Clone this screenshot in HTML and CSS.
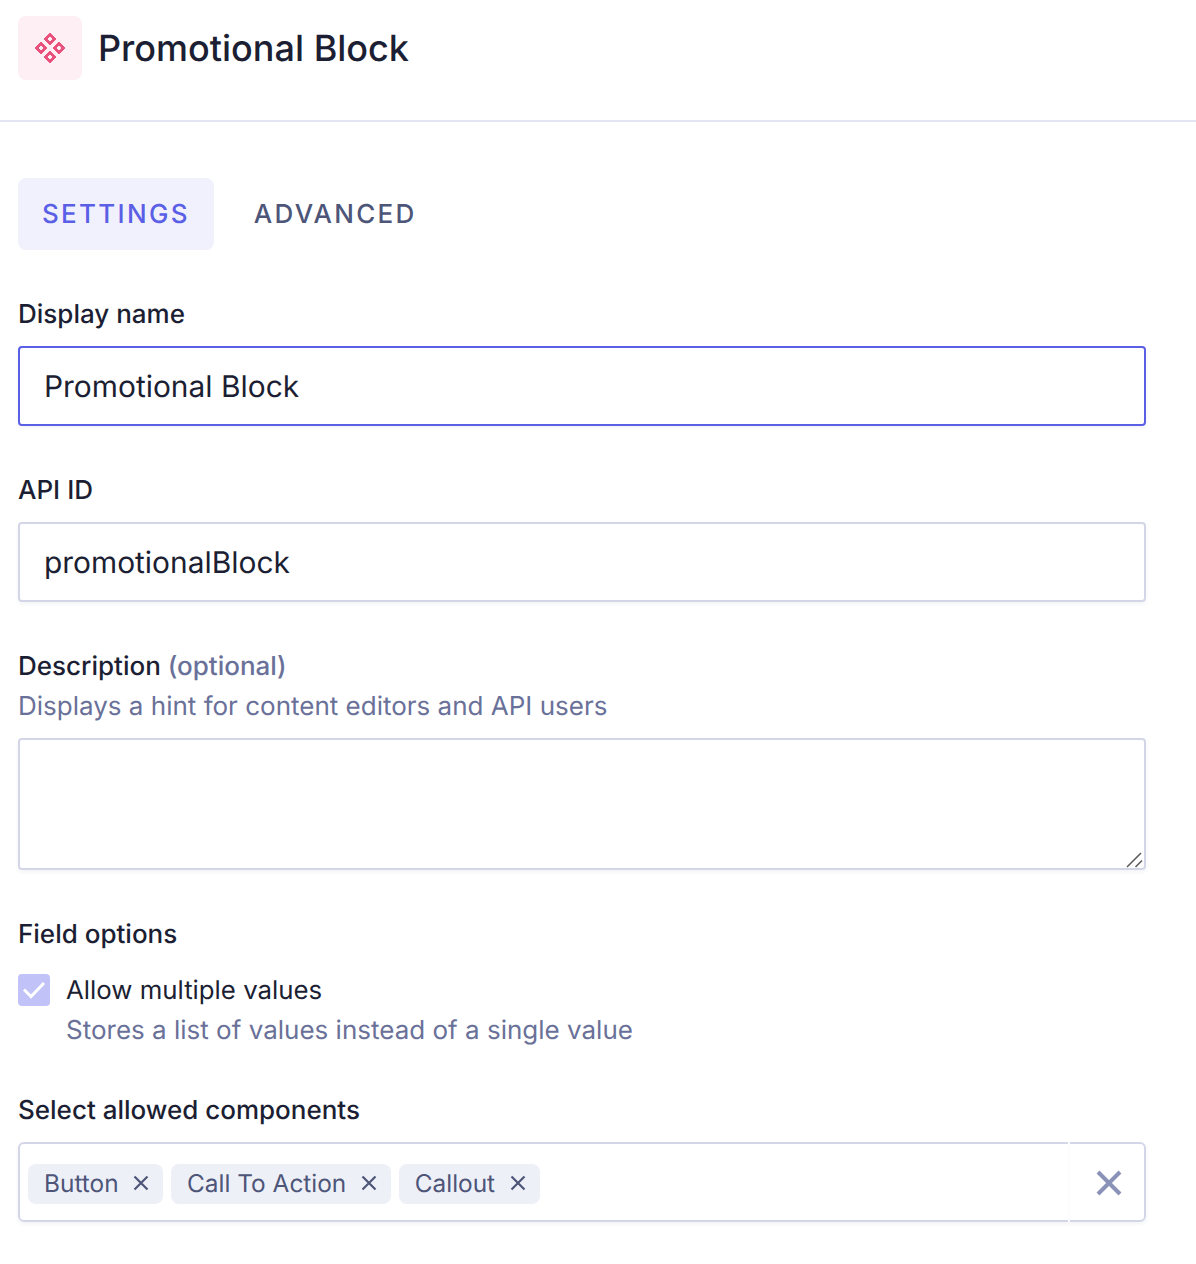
FILE: index.html
```html
<!DOCTYPE html>
<html lang="en">
<head>
<meta charset="utf-8">
<title>Promotional Block</title>
<link rel="stylesheet" href="styles.css">
</head>
<body>
<header class="header">
  <div class="header-icon">
    <svg class="pixel-icon" width="32" height="32" viewBox="0 0 32 32" fill="none" stroke="#e9527d" stroke-width="2.4">
      <path d="M16 2.500l4.500 4.500-4.500 4.500-4.500-4.500z"/>
      <path d="M16 20.500l4.500 4.500-4.500 4.500-4.500-4.500z"/>
      <path d="M7 11.500l4.500 4.500-4.500 4.500-4.500-4.500z"/>
      <path d="M25 11.500l4.500 4.500-4.500 4.500-4.500-4.500z"/>
    </svg>
  </div>
  <h1 class="title">Promotional Block</h1>
</header>
<main class="content">
  <nav class="tabs">
    <div class="tab tab-active">SETTINGS</div>
    <div class="tab">ADVANCED</div>
  </nav>
  <section class="field field-name">
    <div class="label">Display name</div>
    <div class="input input-focus">Promotional Block</div>
  </section>
  <section class="field field-api">
    <div class="label">API ID</div>
    <div class="input">promotionalBlock</div>
  </section>
  <section class="field field-desc">
    <div class="label">Description <span class="optional">(optional)</span></div>
    <div class="hint">Displays a hint for content editors and API users</div>
    <div class="textarea">
      <svg class="resize" width="18" height="16" viewBox="0 0 18 16" fill="none" stroke="#5c5c5c" stroke-width="1.6">
        <path d="M1 15L15 1"/>
        <path d="M9.500 15L16 8.500"/>
      </svg>
    </div>
  </section>
  <section class="field field-options">
    <div class="label">Field options</div>
    <div class="check-row">
      <div class="checkbox">
        <svg width="24" height="20" viewBox="0 0 24 20" fill="none" stroke="#fff" stroke-width="3">
          <path d="M2 9.500l7 7L22 3"/>
        </svg>
      </div>
      <div>
        <div class="check-label">Allow multiple values</div>
        <div class="hint check-hint">Stores a list of values instead of a single value</div>
      </div>
    </div>
  </section>
  <section class="field field-select">
    <div class="label">Select allowed components</div>
    <div class="select">
      <div class="chips">
        <div class="chip">Button
          <svg width="16" height="16" viewBox="0 0 16 16" fill="none" stroke="#4d5578" stroke-width="2.200"><path d="M1.500 1.500l13 13M14.500 1.500l-13 13"/></svg>
        </div>
        <div class="chip">Call To Action
          <svg width="16" height="16" viewBox="0 0 16 16" fill="none" stroke="#4d5578" stroke-width="2.200"><path d="M1.500 1.500l13 13M14.500 1.500l-13 13"/></svg>
        </div>
        <div class="chip">Callout
          <svg width="16" height="16" viewBox="0 0 16 16" fill="none" stroke="#4d5578" stroke-width="2.200"><path d="M1.500 1.500l13 13M14.500 1.500l-13 13"/></svg>
        </div>
      </div>
      <div class="clear">
        <svg width="26" height="26" viewBox="0 0 26 26" fill="none" stroke="#8a92b8" stroke-width="4"><path d="M2 2l22 22M24 2L2 24"/></svg>
      </div>
    </div>
  </section>
</main>
</body>
</html>
```
FILE: styles.css
```css
* { box-sizing: border-box; }
html, body { margin: 0; padding: 0; background: #fff; }
body {
  width: 1196px;
  height: 1264px;
  overflow: hidden;
  font-family: Inter, "Noto Sans", sans-serif;
  color: #1c1f33;
  text-rendering: geometricPrecision;
}
.header {
  display: flex;
  align-items: center;
  gap: 16px;
  height: 122px;
  padding: 16px 18px 40px;
  border-bottom: 2px solid #e3e5f2;
}
.header-icon {
  width: 64px;
  height: 64px;
  border-radius: 8px;
  background: #fdeff3;
  display: flex;
  align-items: center;
  justify-content: center;
}
.pixel-icon { shape-rendering: crispEdges; }
.title {
  margin: 0;
  font-size: 36px;
  font-weight: 500;
  line-height: 64px;
  color: #1c1f33;
}
.content { padding: 56px 50px 0 18px; }
.tabs { display: flex; gap: 16px; }
.tab {
  height: 72px;
  padding: 0 24px;
  border-radius: 8px;
  display: flex;
  align-items: center;
  font-size: 26px;
  font-weight: 500;
  letter-spacing: 2.300px;
  color: #4d5578;
}
.tab-active { background: #f1f1fd; color: #5a5fe6; }
.label {
  font-size: 26px;
  font-weight: 500;
  line-height: 42px;
  margin-bottom: -2px;
  color: #1c1f33;
}
.optional { color: #6a7199; }
.field-name { margin-top: 44px; }
.field-api { margin-top: 44px; }
.field-desc { margin-top: 44px; }
.field-options { margin-top: 44px; }
.field-select { margin-top: 40px; }
.input {
  margin-top: 12px;
  height: 80px;
  padding: 2px 24px 0;
  display: flex;
  align-items: center;
  border: 2px solid #d3d6e8;
  border-radius: 4px;
  font-size: 29.900px;
  color: #1c1f33;
  box-shadow: 0 2px 4px rgba(40, 45, 90, .06);
}
.input-focus { border-color: #5a5fe6; }
.hint {
  font-size: 26px;
  line-height: 42px;
  margin-bottom: -2px;
  color: #6a7199;
}
.textarea {
  position: relative;
  margin-top: 12px;
  height: 132px;
  border: 2px solid #d3d6e8;
  border-radius: 4px;
  box-shadow: 0 2px 4px rgba(40, 45, 90, .06);
}
.resize { position: absolute; right: 0; bottom: 0; }
.check-row { display: flex; gap: 16px; margin-top: 20px; }
.checkbox {
  width: 32px;
  height: 32px;
  border-radius: 4px;
  background: #c1c2f8;
  display: flex;
  align-items: center;
  justify-content: center;
}
.check-label { font-size: 25.800px; line-height: 42px; margin-bottom: -2px; color: #1c1f33; margin-top: -4px; }
.select {
  margin-top: 12px;
  height: 80px;
  display: flex;
  border: 2px solid #d3d6e8;
  border-radius: 6px;
  box-shadow: 0 2px 4px rgba(40, 45, 90, .06);
}
.chips {
  flex: 1;
  display: flex;
  align-items: center;
  gap: 8px;
  margin: -2px 0;
  padding: 4px 0 0 8px;
  border-right: 2px solid #fbfcfe;
}
.chip {
  height: 40px;
  padding: 0 14px 2px 16px;
  display: flex;
  align-items: center;
  gap: 14.500px;
  border-radius: 8px;
  background: #eef0f8;
  font-size: 24.400px;
  color: #4d5578;
}
.clear {
  width: 74px;
  padding: 2px 0 0 4px;
  display: flex;
  align-items: center;
  justify-content: center;
}
```
